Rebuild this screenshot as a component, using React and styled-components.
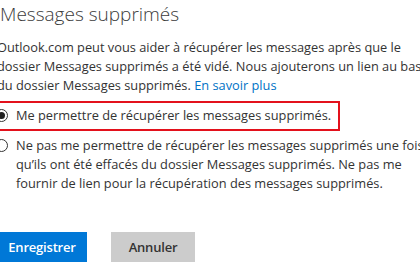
import React from 'react';
import styled, { createGlobalStyle } from 'styled-components';

const GlobalStyle = createGlobalStyle`
  body {
    margin: 0;
    background: #ffffff;
    font-family: "Open Sans", "Noto Sans", sans-serif;
    color: #333333;
  }
`;

const Page = styled.div`
  margin-left: -3px;
  width: 440px;
  overflow: hidden;
`;

const Title = styled.h1`
  margin: 0;
  padding: 2px 0 0 3px;
  font-size: 19px;
  font-weight: 300;
  line-height: 24px;
  color: #3c3c3c;
`;

const Intro = styled.p`
  margin: 12px 0 0;
  font-size: 12.8px;
  line-height: 19px;
  white-space: nowrap;
`;

const Link = styled.a`
  color: #0072c6;
  text-decoration: none;
`;

const Options = styled.div`
  margin-top: 6px;
  display: flex;
  flex-direction: column;
`;

const Option = styled.label`
  display: flex;
  align-items: flex-start;
  gap: 8px;
  margin-left: -10px;
  padding: 3px 0 4px 6px;
  width: ${p => (p.$highlighted ? '343px' : '440px')};
  border: 2px solid ${p => (p.$highlighted ? '#e3111c' : 'transparent')};
  font-size: 12.8px;
  line-height: 19px;
  white-space: nowrap;
`;

const Radio = styled.span`
  flex: none;
  width: 13px;
  height: 13px;
  margin-top: 3px;
  border: 1px solid #333333;
  border-radius: 50%;
  box-sizing: border-box;
  display: flex;
  align-items: center;
  justify-content: center;

  &::after {
    content: '';
    width: 7px;
    height: 7px;
    border-radius: 50%;
    background: ${p => (p.$checked ? '#222222' : 'transparent')};
  }
`;

const Buttons = styled.div`
  margin-top: 33px;
  display: flex;
  gap: 24px;
`;

const Button = styled.button`
  height: 30px;
  width: ${p => p.$width}px;
  border: none;
  padding: 0;
  font-family: "Open Sans", "Noto Sans", sans-serif;
  font-size: 13px;
  font-weight: 600;
  letter-spacing: -0.2px;
  background: ${p => (p.$primary ? '#0078d7' : '#cccccc')};
  color: ${p => (p.$primary ? '#ffffff' : '#333333')};
`;

export default function App() {
  return (
    <>
      <GlobalStyle />
      <Page>
        <Title>Messages supprimés</Title>
        <Intro>
          Outlook.com peut vous aider à récupérer les messages après que le
          <br />
          dossier Messages supprimés a été vidé. Nous ajouterons un lien au bas
          <br />
          du dossier Messages supprimés. <Link href="#">En savoir plus</Link>
        </Intro>
        <Options>
          <Option $highlighted>
            <Radio $checked />
            <span>Me permettre de récupérer les messages supprimés.</span>
          </Option>
          <Option>
            <Radio />
            <span>
              Ne pas me permettre de récupérer les messages supprimés une fois
              <br />
              qu’ils ont été effacés du dossier Messages supprimés. Ne pas me
              <br />
              fournir de lien pour la récupération des messages supprimés.
            </span>
          </Option>
        </Options>
        <Buttons>
          <Button $primary $width={90}>Enregistrer</Button>
          <Button $width={84}>Annuler</Button>
        </Buttons>
      </Page>
    </>
  );
}
